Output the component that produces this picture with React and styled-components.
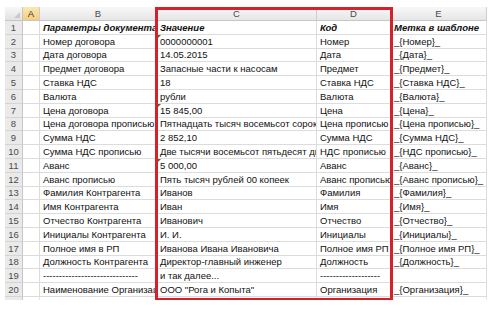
import React from "react";
import styled, { createGlobalStyle, css } from "styled-components";

const GlobalStyle = createGlobalStyle`
  html, body {
    margin: 0;
    padding: 0;
    background: #ffffff;
  }
  body {
    font-family: "Liberation Sans", Arial, sans-serif;
  }
`;

const columns = ["A", "B", "C", "D", "E"];

const rows = [
  ["", "Параметры документа", "Значение", "Код", "Метка в шаблоне"],
  ["", "Номер договора", "0000000001", "Номер", "_{Номер}_"],
  ["", "Дата договора", "14.05.2015", "Дата", "_{Дата}_"],
  ["", "Предмет договора", "Запасные части к насосам", "Предмет", "_{Предмет}_"],
  ["", "Ставка НДС", "18", "Ставка НДС", "_{Ставка НДС}_"],
  ["", "Валюта", "рубли", "Валюта", "_{Валюта}_"],
  ["", "Цена договора", "15 845,00", "Цена", "_{Цена}_"],
  ["", "Цена договора прописью", "Пятнадцать тысяч восемьсот сорок пять рублей 00 копеек", "Цена прописью", "_{Цена прописью}_"],
  ["", "Сумма НДС", "2 852,10", "Сумма НДС", "_{Сумма НДС}_"],
  ["", "Сумма НДС прописью", "Две тысячи восемьсот пятьдесят два рубля 10 копеек", "НДС прописью", "_{НДС прописью}_"],
  ["", "Аванс", "5 000,00", "Аванс", "_{Аванс}_"],
  ["", "Аванс прописью", "Пять тысяч рублей 00 копеек", "Аванс прописью", "_{Аванс прописью}_"],
  ["", "Фамилия Контрагента", "Иванов", "Фамилия", "_{Фамилия}_"],
  ["", "Имя Контрагента", "Иван", "Имя", "_{Имя}_"],
  ["", "Отчество Контрагента", "Иванович", "Отчество", "_{Отчество}_"],
  ["", "Инициалы Контрагента", "И. И.", "Инициалы", "_{Инициалы}_"],
  ["", "Полное имя в РП", "Иванова Ивана Ивановича", "Полное имя РП", "_{Полное имя РП}_"],
  ["", "Должность Контрагента", "Директор-главный инженер", "Должность", "_{Должность}_"],
  ["", "------------------------------", "и так далее...", "-------------------", ""],
  ["", "Наименование Организации", "ООО \"Рога и Копыта\"", "Организация", "_{Организация}_"],
];

// cells showing the green "number stored as text" marker
const flagged = new Set(["2-C", "7-C", "11-C"]);

const Page = styled.div`
  padding: 7px 0 0 5px;
`;

const Sheet = styled.div`
  position: relative;
  display: grid;
  grid-template-columns: 18px 17px 117px 160px 74px 96px;
  grid-template-rows: 14px repeat(20, 13.8px) 3px;
  width: max-content;
  font-size: 9.5px;
  color: #111;
`;

const Corner = styled.div`
  background: linear-gradient(#f7f7f7, #e2e2e2);
  border-right: 1px solid #c6c6c6;
  border-bottom: 1px solid #c6c6c6;
  position: relative;

  &::after {
    content: "";
    position: absolute;
    right: 2px;
    bottom: 2px;
    border-left: 6px solid transparent;
    border-bottom: 6px solid #c9c9c9;
  }
`;

const ColHead = styled.div`
  display: flex;
  align-items: center;
  justify-content: center;
  background: linear-gradient(#f8f8f8, #e6e6e6);
  border-right: 1px solid #cdcdcd;
  border-bottom: 1px solid #c6c6c6;
  color: #4a4a4a;
  font-size: 9.5px;

  ${(p) =>
    p.$active &&
    css`
      background: linear-gradient(#fbe7b5, #f4cf7c);
      color: #333;
    `}
`;

const RowHead = styled.div`
  display: flex;
  align-items: center;
  justify-content: center;
  background: #eaeaea;
  border-right: 1px solid #c6c6c6;
  border-bottom: 1px solid #d4d4d4;
  color: #4a4a4a;
  font-size: 9.5px;
`;

const Cell = styled.div`
  position: relative;
  display: flex;
  align-items: center;
  padding: 0 3px;
  border-right: 1px solid #dcdcdc;
  border-bottom: 1px solid #dcdcdc;
  white-space: nowrap;
  overflow: hidden;
  min-width: 0;

  ${(p) =>
    p.$bold &&
    css`
      font-weight: bold;
      font-style: italic;
    `}

  ${(p) =>
    p.$flag &&
    css`
      &::before {
        content: "";
        position: absolute;
        left: 0;
        top: 0;
        border-top: 4px solid #2f7a32;
        border-right: 4px solid transparent;
      }
    `}
`;

const Stub = styled.div`
  background: ${(p) => (p.$head ? "#eaeaea" : "transparent")};
  border-right: 1px solid ${(p) => (p.$head ? "#c6c6c6" : "#e6e6e6")};
`;

const Frame = styled.div`
  position: absolute;
  grid-column: 4 / 6;
  grid-row: 1 / 23;
  top: 0;
  bottom: -1px;
  left: -2px;
  right: -2px;
  border: 3px solid #d8202b;
  z-index: 2;
  pointer-events: none;
`;

export default function App() {
  return (
    <>
      <GlobalStyle />
      <Page>
        <Sheet>
          <Corner />
          {columns.map((c) => (
            <ColHead key={c} $active={c === "A"}>
              {c}
            </ColHead>
          ))}
          {rows.map((row, i) => (
            <React.Fragment key={i}>
              <RowHead>{i + 1}</RowHead>
              {row.map((text, j) => (
                <Cell
                  key={j}
                  $bold={i === 0 && j > 0}
                  $flag={flagged.has(`${i + 1}-${columns[j]}`)}
                >
                  {text}
                </Cell>
              ))}
            </React.Fragment>
          ))}
          <Stub $head />
          {columns.map((c) => (
            <Stub key={c} />
          ))}
          <Frame />
        </Sheet>
      </Page>
    </>
  );
}
